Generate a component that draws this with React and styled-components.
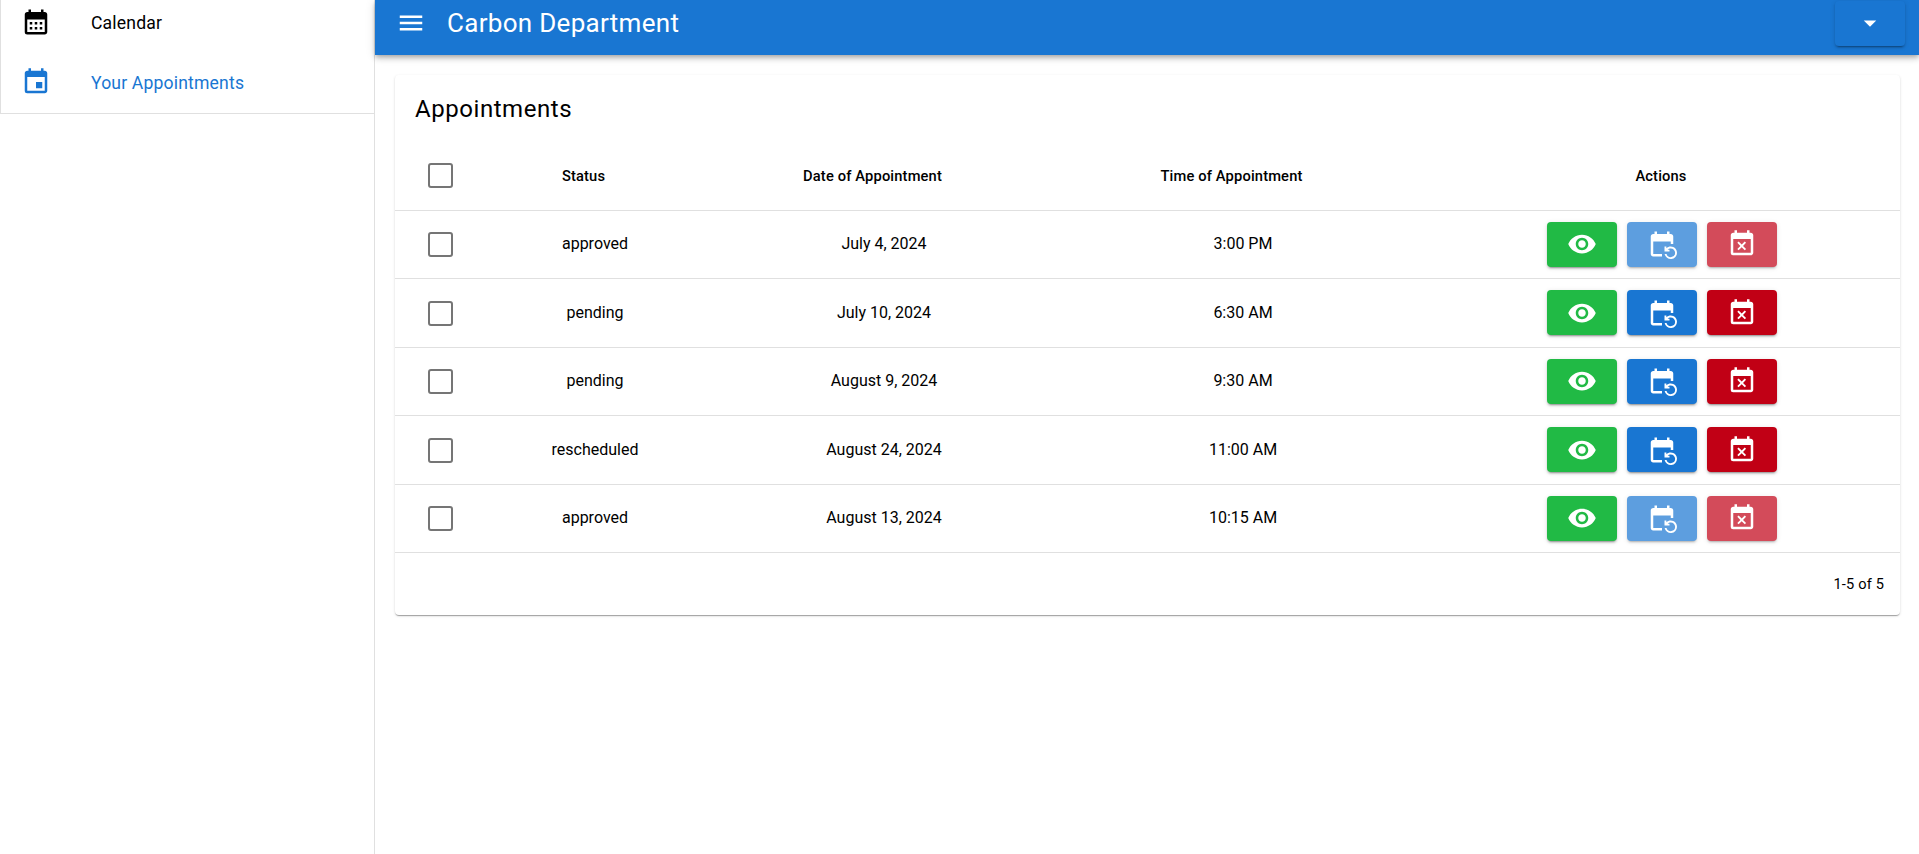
import React from "react";
import styled, { createGlobalStyle } from "styled-components";
import { MdCalendarMonth, MdEvent, MdVisibility, MdEventRepeat, MdEventBusy, MdMenu, MdArrowDropDown } from "react-icons/md";

const Global = createGlobalStyle`
  html, body { margin: 0; padding: 0; background: #fff; }
  body { font-family: Roboto, "Liberation Sans", sans-serif; color: #000; }
`;

const Page = styled.div`
  display: flex;
  width: 100%;
  height: 100vh;
  overflow: hidden;
`;
const Sidebar = styled.aside`
  flex: 0 0 375px;
  box-sizing: border-box;
  border-right: 1px solid #e0e0e0;
`;
const NavList = styled.nav`
  margin-top: -8px;
  padding-bottom: 1px;
  border-left: 1px solid #e0e0e0;
  border-bottom: 1px solid #e0e0e0;
`;
const NavItem = styled.a`
  display: flex;
  align-items: center;
  height: 60px;
  padding-left: 20px;
  font-size: 17.6px;
  letter-spacing: 0.16px;
  color: ${p => (p.$active ? "#1976d2" : "#000")};
  svg { font-size: 30px; flex: none; }
`;
const NavLabel = styled.span`
  margin-left: 40px;
  padding-top: 2px;
`;
const Main = styled.main`
  flex: 1;
  min-width: 0;
  display: flex;
  flex-direction: column;
`;
const AppBar = styled.header`
  flex: none;
  height: 55px;
  box-sizing: border-box;
  padding: 0 14px 10px 21px;
  background: #1976d2;
  color: #fff;
  display: flex;
  align-items: center;
  box-shadow: 0 2px 4px -1px rgba(0,0,0,.2), 0 4px 5px rgba(0,0,0,.14), 0 1px 10px rgba(0,0,0,.12);
  position: relative;
  z-index: 1;
`;
const MenuIcon = styled(MdMenu)`
  font-size: 30px;
  flex: none;
`;
const AppTitle = styled.h1`
  margin: 0 0 0 21px;
  font-size: 26px;
  font-weight: 400;
  letter-spacing: 0.3px;
  flex: 1;
`;
const DropButton = styled.button`
  width: 70px;
  height: 45px;
  margin-top: 1px;
  border: 0;
  border-radius: 4px;
  background: #1976d2;
  color: #fff;
  display: flex;
  align-items: center;
  justify-content: center;
  padding: 0;
  box-shadow: 0 3px 1px -2px rgba(0,0,0,.2), 0 2px 2px rgba(0,0,0,.14), 0 1px 5px rgba(0,0,0,.12);
  svg { font-size: 30px; }
`;
const Content = styled.div`
  padding: 20px 19px 0 20px;
`;
const Card = styled.section`
  border-radius: 4px;
  background: #fff;
  box-shadow: 0 2px 1px -1px rgba(0,0,0,.2), 0 1px 1px rgba(0,0,0,.14), 0 1px 3px rgba(0,0,0,.12);
`;
const CardTitle = styled.h2`
  margin: 0;
  height: 65px;
  box-sizing: border-box;
  padding: 18px 0 0 20px;
  font-size: 24px;
  font-weight: 400;
  line-height: 32px;
  letter-spacing: 0.55px;
`;
const Row = styled.div`
  display: grid;
  grid-template-columns: 91px 218px 360px 358px 1fr;
  align-items: center;
  box-sizing: border-box;
  height: ${p => (p.$head ? "70.6px" : "68.5px")};
  border-bottom: 1px solid #e0e0e0;
`;
const Cell = styled.div`
  text-align: center;
  font-size: 16px;
  padding-bottom: 1px;
`;
const HeadCell = styled.div`
  text-align: center;
  font-size: 14.7px;
  font-weight: 500;
  letter-spacing: 0.15px;
  padding-top: 2px;
  padding-right: ${p => (p.$plain ? "0" : "23px")};
`;
const CheckCell = styled.div`
  display: flex;
  justify-content: center;
  padding-top: 1px;
`;
const Check = styled.span`
  display: block;
  width: 25px;
  height: 25px;
  box-sizing: border-box;
  border: 2px solid #757575;
  border-radius: 3px;
`;
const Actions = styled.div`
  display: flex;
  justify-content: center;
  gap: 10px;
  padding-left: 1px;
`;
const ActionButton = styled.button`
  width: 70px;
  height: 45px;
  border: 0;
  padding: 0;
  border-radius: 4px;
  background: ${p => p.$color};
  opacity: ${p => (p.$disabled ? 0.7 : 1)};
  color: #fff;
  display: flex;
  align-items: center;
  justify-content: center;
  box-shadow: 0 3px 1px -2px rgba(0,0,0,.2), 0 2px 2px rgba(0,0,0,.14), 0 1px 5px rgba(0,0,0,.12);
  svg { font-size: 30px; }
`;
const Footer = styled.div`
  height: 62px;
  display: flex;
  align-items: center;
  justify-content: flex-end;
  padding-right: 16px;
  font-size: 14.6px;
  letter-spacing: 0.15px;
`;

const rows = [
  ["approved", "July 4, 2024", "3:00 PM", true],
  ["pending", "July 10, 2024", "6:30 AM", false],
  ["pending", "August 9, 2024", "9:30 AM", false],
  ["rescheduled", "August 24, 2024", "11:00 AM", false],
  ["approved", "August 13, 2024", "10:15 AM", true],
];

export default function App() {
  return (
    <Page>
      <Global />
      <Sidebar>
        <NavList>
          <NavItem><MdCalendarMonth /><NavLabel>Calendar</NavLabel></NavItem>
          <NavItem $active><MdEvent /><NavLabel>Your Appointments</NavLabel></NavItem>
        </NavList>
      </Sidebar>
      <Main>
        <AppBar>
          <MenuIcon />
          <AppTitle>Carbon Department</AppTitle>
          <DropButton aria-label="menu"><MdArrowDropDown /></DropButton>
        </AppBar>
        <Content>
          <Card>
            <CardTitle>Appointments</CardTitle>
            <Row $head>
              <CheckCell><Check /></CheckCell>
              <HeadCell>Status</HeadCell>
              <HeadCell>Date of Appointment</HeadCell>
              <HeadCell>Time of Appointment</HeadCell>
              <HeadCell $plain>Actions</HeadCell>
            </Row>
            {rows.map(([status, date, time, off], i) => (
              <Row key={i}>
                <CheckCell><Check /></CheckCell>
                <Cell>{status}</Cell>
                <Cell>{date}</Cell>
                <Cell>{time}</Cell>
                <Actions>
                  <ActionButton $color="#21ba45"><MdVisibility /></ActionButton>
                  <ActionButton $color="#1976d2" $disabled={off}><MdEventRepeat /></ActionButton>
                  <ActionButton $color="#c10015" $disabled={off}><MdEventBusy /></ActionButton>
                </Actions>
              </Row>
            ))}
            <Footer>1-5 of 5</Footer>
          </Card>
        </Content>
      </Main>
    </Page>
  );
}
